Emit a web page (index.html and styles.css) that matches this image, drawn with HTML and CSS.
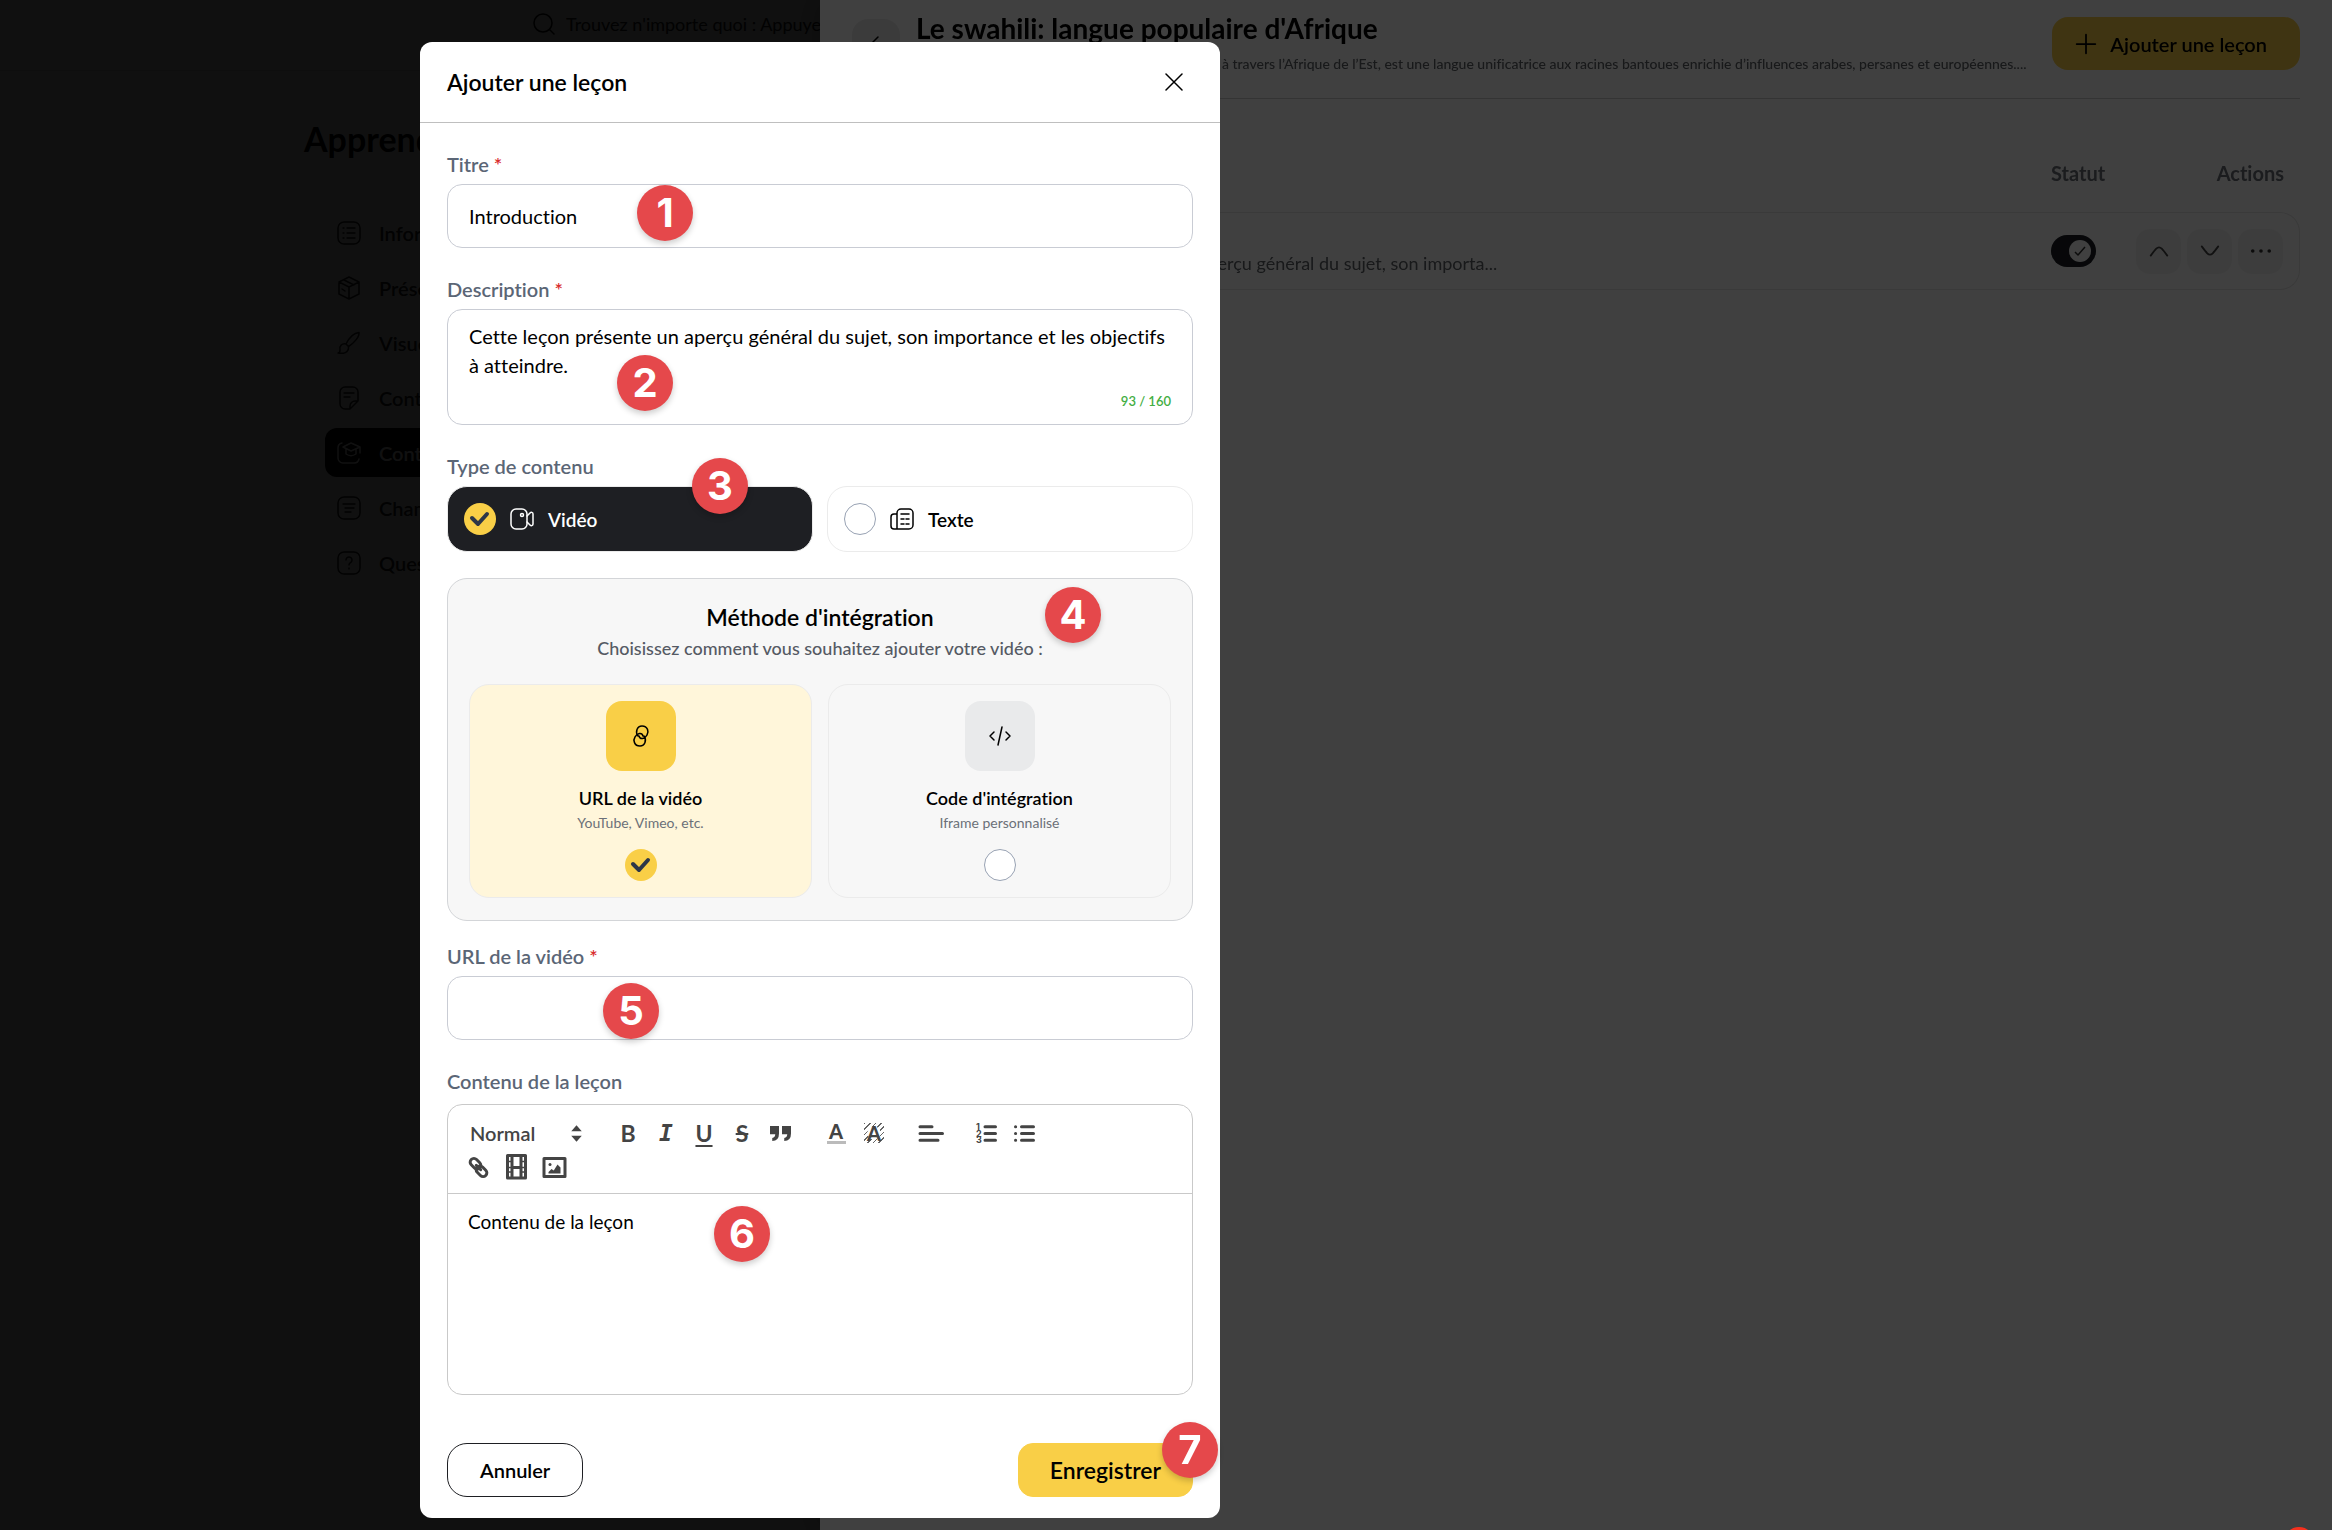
FILE: index.html
```html
<!DOCTYPE html>
<html lang="fr">
<head>
    <meta charset="UTF-8">
    <meta name="viewport" content="width=device-width, initial-scale=1.0">
    <title>Ajouter une leçon</title>
    <link rel="stylesheet" href="styles.css">
</head>
<body>
    <header class="topbar">
        <div class="search">
            <svg viewBox="0 0 24 24" class="icon"><circle cx="11" cy="11" r="9"/><path d="M18 18l4 4"/></svg>
            <input type="search" aria-label="Recherche" placeholder="Trouvez n'importe quoi : Appuyez">
        </div>
    </header>
    <aside class="sidebar">
        <h1>Apprend</h1>
        <nav>
            <a href="#">
                <svg viewBox="0 0 24 24" class="icon"><rect x="1" y="1" width="22" height="22" rx="6"/><path d="M6 7h1M10 7h8M6 12h1M10 12h8M6 17h1M10 17h8"/></svg>
                Inform
            </a>
            <a href="#">
                <svg viewBox="0 0 24 24" class="icon"><path d="M12 1l10 5v12l-10 5-10-5V6zM2 6l10 5 10-5M12 11v12M7 4l10 5M5 13l3 2"/></svg>
                Présen
            </a>
            <a href="#">
                <svg viewBox="0 0 24 24" class="icon"><path d="M9 13C12 7 17 2 22 1.500C22.500 6 17 12 11.500 15.500zM9 13c-4-1-7 2-6 6 0 2-1 3-2 3 5 1 11 0 10.500-6.500"/></svg>
                Visuel
            </a>
            <a href="#">
                <svg viewBox="0 0 24 24" class="icon"><path d="M13 23H8a5 5 0 0 1-5-5V6a5 5 0 0 1 5-5h8a5 5 0 0 1 5 5v9zM13 23v-3a5 5 0 0 1 5-5h3M7 7h10M7 11h6"/></svg>
                Conte
            </a>
            <a href="#" class="active">
                <svg viewBox="0 0 24 24" class="icon"><path d="M5 2a5 5 0 0 0-4 5v10a5 5 0 0 0 5 5h11a5 5 0 0 0 5-4M6 6l8-4 9 4-9 4zM9 8v5c3 2 7 2 10 0V8M23 6v6"/></svg>
                Conte
            </a>
            <a href="#">
                <svg viewBox="0 0 24 24" class="icon"><rect x="1" y="1" width="22" height="22" rx="6"/><path d="M6 8h12M8 12h9M8 16h6"/></svg>
                Cham
            </a>
            <a href="#">
                <svg viewBox="0 0 24 24" class="icon"><rect x="1" y="1" width="22" height="22" rx="6"/><path d="M9 9a3 3 0 1 1 4.500 2.600c-1 .600-1.500 1-1.500 2.400M12 17v1"/></svg>
                Quest
            </a>
        </nav>
    </aside>

    <div class="backdrop"></div>
    <section class="drawer">
        <header class="drawer-header">
            <button class="back" aria-label="Retour"><svg viewBox="0 0 24 24" class="icon"><path d="M14 6l-6 6 6 6"/></svg></button>
            <div class="drawer-title">
                <h2>Le swahili: langue populaire d'Afrique</h2>
                <p>Le swahili, pratiqué par des millions de personnes à travers l’Afrique de l’Est, est une langue unificatrice aux racines bantoues enrichie d’influences arabes, persanes et européennes....</p>
            </div>
            <button class="add"><svg viewBox="0 0 24 24" class="icon"><path d="M12 4v16M4 12h16"/></svg>Ajouter une leçon</button>
        </header>
        <table class="lessons">
            <thead>
                <tr><th>Leçon</th><th class="col-statut">Statut</th><th class="col-actions">Actions</th></tr>
            </thead>
            <tbody>
                <tr>
                    <td class="lesson">
                        <strong>Introduction</strong>
                        <p>Cette leçon présente un aperçu général du sujet, son importa...</p>
                    </td>
                    <td><input type="checkbox" class="switch" aria-label="Statut" checked></td>
                    <td>
                        <div class="actions">
                            <button aria-label="Monter"><svg viewBox="0 0 24 24" class="icon"><path d="M3 17c6-8 7-9 9-9s3 1 9 9"/></svg></button>
                            <button aria-label="Descendre"><svg viewBox="0 0 24 24" class="icon"><path d="M3 7c6 8 7 9 9 9s3-1 9-9"/></svg></button>
                            <button aria-label="Plus"><svg viewBox="0 0 24 24" class="icon dots"><circle cx="3" cy="12" r="2"/><circle cx="12" cy="12" r="2"/><circle cx="21" cy="12" r="2"/></svg></button>
                        </div>
                    </td>
                </tr>
            </tbody>
        </table>
    </section>

    <div class="backdrop modal-wrap">
        <form class="modal" role="dialog" aria-labelledby="titre-modal">
            <header class="modal-header">
                <h2 id="titre-modal">Ajouter une leçon</h2>
                <button type="button" class="close" aria-label="Fermer"><svg viewBox="0 0 18 18" class="icon"><path d="M1 1l16 16M17 1L1 17"/></svg></button>
            </header>
            <div class="modal-body">
                <div class="field">
                    <label for="titre">Titre <span class="required">*</span></label>
                    <input type="text" id="titre" class="box" value="Introduction">
                </div>
                <div class="field">
                    <label for="description">Description <span class="required">*</span></label>
                    <div class="box textbox">
                        <textarea id="description" rows="2">Cette leçon présente un aperçu général du sujet, son importance et les objectifs à atteindre.</textarea>
                        <span class="counter">93 / 160</span>
                    </div>
                </div>
                <fieldset class="field">
                    <legend>Type de contenu</legend>
                    <div class="types">
                        <label class="type">
                            <input type="radio" name="type" checked>
                            <svg viewBox="0 0 24 24" class="icon"><rect x="1" y="2" width="16" height="20" rx="5"/><circle cx="12" cy="8" r="1.500"/><path d="M17 9l3-3c1-1 3-1 3 1v10c0 2-2 2-3 1l-3-3"/></svg>
                            Vidéo
                        </label>
                        <label class="type">
                            <input type="radio" name="type">
                            <svg viewBox="0 0 24 24" class="icon"><path d="M7 22V6a4 4 0 0 1 4-4h8a4 4 0 0 1 4 4v12a4 4 0 0 1-4 4H4a3 3 0 0 1-3-3v-9a3 3 0 0 1 3-3h3M11 7h8M11 12h3M16 12h3M11 17h3M16 17h3"/></svg>
                            Texte
                        </label>
                    </div>
                </fieldset>
                <div class="panel">
                    <h3>Méthode d'intégration</h3>
                    <p>Choisissez comment vous souhaitez ajouter votre vidéo :</p>
                    <div class="methods">
                        <label class="method">
                            <span class="method-icon"><svg viewBox="0 0 24 24" class="icon"><path d="M9 12c-3-4-1-10 4-10 6 0 7 6 5 9-2 4-7 5-8 1M15 12c3 4 1 10-4 10-6 0-7-6-5-9 2-4 7-5 8-1"/></svg></span>
                            <span class="method-name">URL de la vidéo</span>
                            <small>YouTube, Vimeo, etc.</small>
                            <input type="radio" name="methode" checked>
                        </label>
                        <label class="method">
                            <span class="method-icon"><svg viewBox="0 0 24 24" class="icon"><path d="M6 8l-4 4 4 4M18 8l4 4-4 4M14 3l-4 18"/></svg></span>
                            <span class="method-name">Code d'intégration</span>
                            <small>Iframe personnalisé</small>
                            <input type="radio" name="methode">
                        </label>
                    </div>
                </div>
                <div class="field">
                    <label for="url">URL de la vidéo <span class="required">*</span></label>
                    <input type="text" id="url" class="box">
                </div>
                <div class="field">
                    <label for="contenu">Contenu de la leçon</label>
                    <div class="editor">
                        <div class="toolbar">
                            <div class="format">
                                <select aria-label="Format"><option>Normal</option><option>Titre 1</option></select>
                                <svg viewBox="0 0 18 18"><path d="M5.500 7.500L9 3.500l3.500 4zM5.500 10.500L9 14.500l3.500-4z"/></svg>
                            </div>
                            <div class="tools">
                                <button type="button" class="letter">B</button>
                                <button type="button" class="letter italic">I</button>
                                <button type="button" class="letter underline">U</button>
                                <button type="button" class="letter strike">S</button>
                                <button type="button" aria-label="Citation"><svg viewBox="0 0 18 18"><path class="fill" d="M2 4h6v5q0 5-4.500 5v-2q2-.500 2-2.500H2zM10 4h6v5q0 5-4.500 5v-2q2-.500 2-2.500H10z"/></svg></button>
                            </div>
                            <div class="tools">
                                <button type="button" class="letter color">A</button>
                                <button type="button" class="letter highlight">A</button>
                            </div>
                            <div class="tools">
                                <button type="button" aria-label="Aligner"><svg viewBox="0 0 18 18"><path d="M1 4.500h8M1 9h15M1 13.500h12" transform="translate(1 0)"/></svg></button>
                            </div>
                            <div class="tools">
                                <button type="button" aria-label="Liste numérotée"><svg viewBox="0 0 18 18"><path d="M8 4.500h7M8 9h7M8 13.500h7"/><text x="2" y="6.500">1</text><text x="2" y="11">2</text><text x="2" y="15.500">3</text></svg></button>
                                <button type="button" aria-label="Liste à puces"><svg viewBox="0 0 18 18"><path d="M7 4.500h8M7 9h8M7 13.500h8M3 4.500h.100M3 9h.100M3 13.500h.100"/></svg></button>
                            </div>
                            <div class="tools last">
                                <button type="button" aria-label="Lien"><svg viewBox="0 0 18 18"><rect x="3" y="4" width="8" height="5" rx="2.500" transform="rotate(45 7 6.500)"/><rect x="7" y="9" width="8" height="5" rx="2.500" transform="rotate(45 11 11.500)"/><path d="M7.500 7.500l3 3"/></svg></button>
                                <button type="button" aria-label="Vidéo"><svg viewBox="0 0 18 18"><rect x="3" y="1" width="12" height="15"/><path d="M6 2v13M12 2v13M6 9h6"/><path class="thin" d="M3 5h3M3 9h3M3 12h3M12 5h3M12 9h3M12 12h3"/></svg></button>
                                <button type="button" aria-label="Image"><svg viewBox="0 0 18 18"><rect x="2" y="3" width="14" height="12"/><circle class="fill" cx="6" cy="7" r="1"/><path class="fill" d="M5 13v-1l2-2 1.500 1L11 7l2 2v4z"/></svg></button>
                            </div>
                        </div>
                        <textarea id="contenu">Contenu de la leçon</textarea>
                    </div>
                </div>
            </div>
            <footer class="modal-footer">
                <button type="button" class="cancel">Annuler</button>
                <button type="submit" class="save">Enregistrer</button>
            </footer>
            <span class="badge b1">1</span>
            <span class="badge b2">2</span>
            <span class="badge b3">3</span>
            <span class="badge b4">4</span>
            <span class="badge b5">5</span>
            <span class="badge b6">6</span>
            <span class="badge b7">7</span>
        </form>
    </div>
    <span class="notification"></span>
</body>
</html>
```
FILE: styles.css
```css
* {
    box-sizing: border-box;
}
body {
    margin: 0;
    background-color: white;
    font-family: Lato, sans-serif;
    font-size: 20px;
    font-variant-ligatures: none;
    color: black;
}
h1, h2, h3, p {
    margin: 0;
}
button, input, select, textarea {
    font: inherit;
    font-variant-ligatures: none;
    color: inherit;
    margin: 0;
    padding: 0;
    border: none;
    background: none;
}
button {
    display: flex;
    align-items: center;
    justify-content: center;
    cursor: pointer;
}
.icon {
    width: 24px;
    height: 24px;
    flex: none;
    fill: none;
    stroke: currentColor;
    stroke-width: 1.5;
    stroke-linecap: round;
    stroke-linejoin: round;
}

/* Page principale */
.topbar {
    height: 71px;
    padding-left: 518px;
    border-bottom: 1px solid #ddd;
}
.search {
    display: flex;
    align-items: center;
    gap: 10px;
    width: 600px;
    height: 48px;
    padding-left: 14px;
    border-radius: 24px;
    background-color: #f6f6f6;
}
.search input {
    flex: 1;
    font-size: 18px;
}
.search input::placeholder {
    color: #222;
}
.sidebar {
    width: 800px;
    padding: 48px 0 0 304px;
}
.sidebar h1 {
    font-size: 34px;
    line-height: 40px;
    font-weight: 700;
}
.sidebar nav {
    display: flex;
    flex-direction: column;
    gap: 6px;
    margin: 49px 0 0 21px;
}
.sidebar a {
    display: flex;
    align-items: center;
    gap: 18px;
    height: 49px;
    padding-left: 12px;
    border-radius: 12px;
    color: #222;
    font-weight: 600;
    text-decoration: none;
}
.sidebar a.active {
    background-color: black;
    color: white;
}

/* Fonds sombres */
.backdrop {
    position: fixed;
    inset: 0;
    background-color: rgba(0, 0, 0, 0.75);
}

/* Panneau de droite */
.drawer {
    position: fixed;
    inset: 0 0 0 820px;
    padding: 0 32px;
    background-color: white;
    box-shadow: 0 0 30px rgba(0, 0, 0, 0.3);
}
.drawer-header {
    display: flex;
    align-items: flex-start;
    gap: 16px;
    height: 99px;
    border-bottom: 1px solid #d0d0d0;
}
.back {
    flex: none;
    width: 48px;
    height: 48px;
    margin-top: 19px;
    border-radius: 16px;
    background-color: #ececec;
}
.drawer-title {
    flex: 1;
    min-width: 0;
    padding-top: 12px;
}
.drawer-title h2 {
    font-size: 28px;
    line-height: 32px;
    font-weight: 700;
}
.drawer-title p {
    margin-top: 9px;
    font-size: 14px;
    line-height: 22px;
    font-weight: 500;
    color: #5f6368;
    white-space: nowrap;
}
.add {
    gap: 10px;
    height: 53px;
    margin-top: 17px;
    padding: 0 33px 0 20px;
    border-radius: 16px;
    background-color: #f9cf47;
    font-weight: 600;
}
.add .icon {
    width: 28px;
    height: 28px;
}
.lessons {
    width: 100%;
    margin-top: 35px;
    border-spacing: 0;
    table-layout: fixed;
}
.lessons th, .lessons td {
    height: 78px;
    padding: 0;
    text-align: left;
}
.lessons th {
    color: #6b7078;
    font-weight: 700;
}
.lessons td {
    border: solid #e6e6e6;
    border-width: 1px 0;
}
.lessons td:first-child {
    border-left-width: 1px;
    border-radius: 20px 0 0 20px;
}
.lessons td:last-child {
    border-right-width: 1px;
    border-radius: 0 20px 20px 0;
}
.col-statut {
    width: 70px;
}
.lessons th.col-actions {
    width: 179px;
    padding-right: 16px;
    text-align: right;
}
.lessons td.lesson {
    padding-left: 152px;
}
.lesson strong {
    font-weight: 600;
}
.lesson p {
    font-size: 18px;
    line-height: 22px;
    color: #5f6368;
}
.switch {
    display: block;
    appearance: none;
    width: 45px;
    height: 32px;
    padding: 5px;
    border-radius: 16px;
    background-color: #1c1f24;
}
.switch::before {
    content: "";
    display: block;
    width: 22px;
    height: 22px;
    margin-left: 13px;
    border-radius: 50%;
    background: white url("data:image/svg+xml,%3Csvg xmlns='http://www.w3.org/2000/svg' viewBox='0 0 22 22' fill='none' stroke='%23333' stroke-width='1.5'%3E%3Cpath d='M6 12l3 3 7-8'/%3E%3C/svg%3E");
}
.actions {
    display: flex;
    justify-content: flex-end;
    gap: 6px;
    padding-right: 16px;
}
.actions button {
    width: 45px;
    height: 45px;
    border-radius: 14px;
    background-color: #f4f4f4;
    color: #444;
}
.actions .icon {
    width: 22px;
    height: 22px;
    stroke-width: 2;
}
.actions .dots {
    fill: #333;
    stroke: none;
}

/* Fenêtre modale */
.modal-wrap {
    padding: 42px 0 0 420px;
    overflow: auto;
}
.modal {
    position: relative;
    max-width: 800px;
    border-radius: 12px;
    background-color: white;
}
.modal-header {
    display: flex;
    align-items: center;
    justify-content: space-between;
    height: 81px;
    padding: 0 37px 0 27px;
    border-bottom: 1px solid #bfbfbf;
}
.modal-header h2 {
    font-size: 23px;
    font-weight: 600;
}
.close .icon {
    width: 18px;
    height: 18px;
}
.modal-body {
    padding: 27px 27px 0;
}
.field {
    display: flex;
    flex-direction: column;
    gap: 6px;
    min-width: 0;
    margin: 0 0 27px;
    padding: 0;
    border: none;
}
.field > label, legend {
    padding: 0;
    line-height: 28px;
    font-weight: 600;
    color: #5b6676;
}
.required {
    color: #d92d2d;
}
.box {
    width: 100%;
    height: 64px;
    padding: 0 21px;
    border: 1px solid #c9ccd4;
    border-radius: 15px;
}
.textbox {
    display: flex;
    flex-direction: column;
    height: 116px;
    padding-top: 12px;
}
.textbox textarea {
    height: 58px;
    line-height: 29px;
    resize: none;
    overflow: hidden;
}
.counter {
    margin-top: 10px;
    align-self: flex-end;
    font-size: 13px;
    line-height: 22px;
    font-weight: 600;
    color: #43ae43;
}
.types {
    display: grid;
    grid-template-columns: 1fr 1fr;
    gap: 14px;
    margin-top: 6px;
}
.type {
    display: flex;
    align-items: center;
    gap: 14px;
    height: 66px;
    padding-left: 16px;
    border: 1px solid #ebebeb;
    border-radius: 20px;
    font-size: 19px;
    font-weight: 600;
    cursor: pointer;
}
.type:has(:checked) {
    background-color: #1e1f23;
    color: white;
}
input[type="radio"] {
    appearance: none;
    flex: none;
    width: 32px;
    height: 32px;
    border: 1px solid #98a2b3;
    border-radius: 50%;
    background-color: white;
}
input[type="radio"]:checked {
    border: none;
    background: #f9cf47 url("data:image/svg+xml,%3Csvg xmlns='http://www.w3.org/2000/svg' viewBox='0 0 32 32' fill='none' stroke='%232d3748' stroke-width='4' stroke-linecap='round' stroke-linejoin='round'%3E%3Cpath d='M8 15l6 6 9-10'/%3E%3C/svg%3E");
}
.panel {
    margin: -1px 0 21px;
    padding: 22px 21px;
    border: 1px solid #d3d5d8;
    border-radius: 20px;
    background-color: #f7f7f7;
    text-align: center;
}
.panel h3 {
    font-size: 23px;
    line-height: 32px;
    font-weight: 600;
}
.panel p {
    margin-top: 1px;
    font-size: 18px;
    line-height: 28px;
    font-weight: 500;
    color: #555a64;
}
.methods {
    display: grid;
    grid-template-columns: 1fr 1fr;
    gap: 16px;
    margin-top: 22px;
}
.method {
    display: flex;
    flex-direction: column;
    align-items: center;
    height: 214px;
    padding-top: 16px;
    border: 1px solid #ebebeb;
    border-radius: 20px;
    cursor: pointer;
}
.method:has(:checked) {
    background-color: #fff6da;
}
.method-icon {
    display: flex;
    align-items: center;
    justify-content: center;
    width: 70px;
    height: 70px;
    border-radius: 16px;
    background-color: #e9eaeb;
}
.method:has(:checked) .method-icon {
    background-color: #f9cf47;
}
.method-name {
    margin-top: 13px;
    font-size: 18px;
    line-height: 28px;
    font-weight: 600;
}
.method small {
    font-size: 14px;
    line-height: 22px;
    color: #6b7078;
}
.method input {
    margin-top: 15px;
}

/* Editeur */
.editor {
    margin-top: 3px;
    border: 1px solid #c9c9c9;
    border-radius: 15px;
}
.toolbar {
    display: flex;
    flex-wrap: wrap;
    column-gap: 18px;
    height: 89px;
    padding: 11px 24px 9px 11px;
    border-bottom: 1px solid #c9c9c9;
    color: #444;
}
.toolbar svg {
    width: 27px;
    height: 27px;
    fill: none;
    stroke: #444;
    stroke-width: 2;
    stroke-linecap: round;
    stroke-linejoin: round;
}
.format {
    position: relative;
    width: 132px;
    height: 34px;
}
.format select {
    appearance: none;
    width: 100%;
    height: 34px;
    padding-left: 11px;
    font-weight: 600;
}
.format svg {
    position: absolute;
    right: 1px;
    top: 4px;
    fill: #444;
    stroke: none;
    pointer-events: none;
}
.tools {
    display: flex;
}
.tools button {
    width: 38px;
    height: 34px;
}
.toolbar .fill {
    fill: #444;
    stroke: none;
}
.toolbar .thin {
    stroke-width: 1;
}
.tools text {
    fill: #444;
    stroke: none;
    font: bold 6px Inter, sans-serif;
}
.tools.last {
    width: 100%;
}
.tools .letter {
    font-size: 23px;
    font-weight: 700;
}
.tools .italic {
    font-family: "DejaVu Sans Mono", monospace;
    font-style: italic;
}
.tools .underline {
    text-decoration: underline 2px;
    text-underline-offset: 3px;
}
.tools .strike {
    text-decoration: line-through 2px;
}
.tools .color, .tools .highlight {
    font-size: 20px;
    font-weight: 900;
    line-height: 20px;
}
.tools .color {
    padding-bottom: 4px;
    background: linear-gradient(#bbb, #bbb) center 25px / 19px 3px no-repeat;
}
.tools .highlight {
    background:
        radial-gradient(white 6px, transparent 7px) center / 20px 20px no-repeat,
        repeating-linear-gradient(135deg, #666 0 1px, transparent 1px 4px) center / 20px 20px no-repeat;
}
.editor textarea {
    display: block;
    width: 100%;
    height: 200px;
    padding: 14px 20px;
    font-size: 19px;
    line-height: 28px;
    resize: none;
}
.modal-footer {
    display: flex;
    justify-content: space-between;
    padding: 21px 27px;
}
.cancel, .save {
    height: 54px;
    padding: 0 32px;
    border: 1px solid #1e1f23;
    border-radius: 20px;
    font-weight: 600;
}
.save {
    padding: 0 31px;
    border-color: #f9cf47;
    border-radius: 15px;
    background-color: #f9cf47;
    font-size: 23px;
}

/* Repères numérotés */
.badge {
    position: absolute;
    width: 56px;
    height: 56px;
    border-radius: 50%;
    background-color: #e5484b;
    box-shadow: 0 3px 6px rgba(0, 0, 0, 0.2);
    color: white;
    font: bold 40px/56px Inter, sans-serif;
    text-align: center;
}
.b1 { left: 217px; top: 143px; }
.b2 { left: 197px; top: 313px; }
.b3 { left: 272px; top: 416px; }
.b4 { left: 625px; top: 545px; }
.b5 { left: 183px; top: 941px; }
.b6 { left: 294px; top: 1164px; }
.b7 { left: 742px; top: 1380px; }

.notification {
    position: fixed;
    right: 18px;
    bottom: -27px;
    width: 30px;
    height: 30px;
    border-radius: 50%;
    background-color: #f5301d;
}
```
